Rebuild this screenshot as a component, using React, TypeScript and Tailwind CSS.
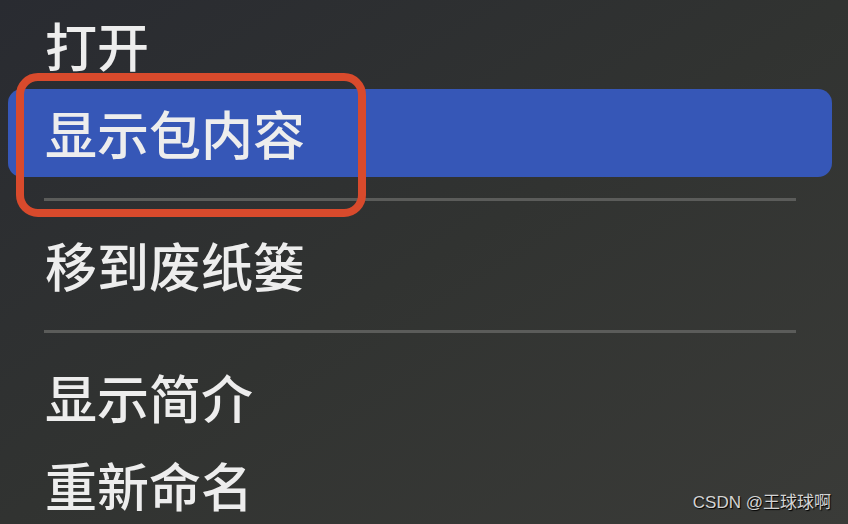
const font = {
  fontFamily: '"Noto Sans CJK SC", "Noto Sans", sans-serif',
};

type Item = { label: string; active?: boolean } | { separator: true };

const items: Item[] = [
  { label: "打开" },
  { label: "显示包内容", active: true },
  { separator: true },
  { label: "移到废纸篓" },
  { separator: true },
  { label: "显示简介" },
  { label: "重新命名" },
];

export default function App() {
  return (
    <div
      className="relative h-[524px] w-full overflow-hidden bg-gradient-to-br from-[#292b31] via-[#313331] to-[#3a3b38] text-[#ededed]"
      style={font}
    >
      <div className="flex flex-col pt-px">
        {items.map((item, i) =>
          "separator" in item ? (
            <div key={i} className="flex h-[44px] items-center pl-[44px] pr-[52px]">
              <div className="h-[3px] w-full bg-[#5b5c5a]" />
            </div>
          ) : (
            <div key={i} className="pl-2 pr-4">
              <div
                className={`flex h-[88px] items-center rounded-[14px] pl-[37px] text-[52px] font-medium leading-none ${
                  item.active ? "bg-[#3657b7]" : ""
                }`}
              >
                {item.label}
              </div>
            </div>
          )
        )}
      </div>

      {/* annotation box */}
      <div className="absolute left-[16px] top-[73px] h-[144px] w-[350px] rounded-[22px] border-[8px] border-[#d84a2c]" />

      <div
        className="absolute bottom-[9px] right-[17px] text-[17px] text-[#d4d4d4] [text-shadow:1px_1px_1px_#000]"
        style={{ fontFamily: '"Liberation Sans", "Noto Sans CJK SC", sans-serif' }}
      >
        CSDN @王球球啊
      </div>
    </div>
  );
}
